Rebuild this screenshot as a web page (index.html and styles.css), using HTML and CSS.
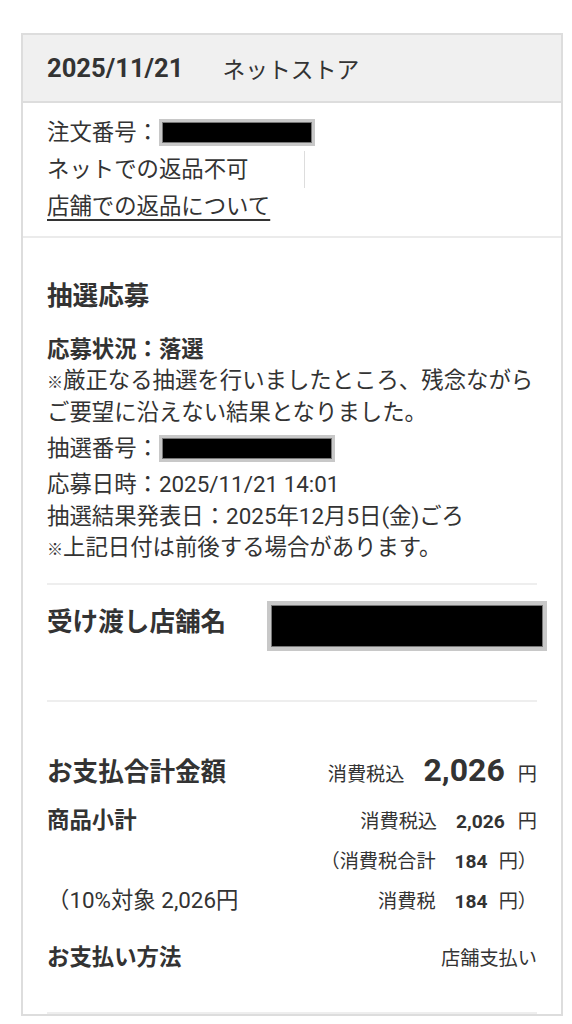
FILE: index.html
```html
<!DOCTYPE html>
<html lang="ja">
<head>
<meta charset="utf-8">
<meta name="viewport" content="width=device-width, initial-scale=1">
<title>注文履歴</title>
<link rel="stylesheet" href="styles.css">
</head>
<body>

<div class="order-card">
  <div class="order-head">
    <span class="order-date">2025/11/21</span>
    <span class="order-shop">ネットストア</span>
  </div>

  <div class="order-info">
    <div class="info-line">注文番号：<span class="masked masked-order"></span></div>
    <div class="info-line"><span class="no-return">ネットでの返品不可</span></div>
    <div class="info-line"><a href="#" class="return-link">店舗での返品について</a></div>
  </div>

  <div class="order-body">

    <!-- lottery result -->
    <div class="block lottery">
      <h2 class="block-title">抽選応募</h2>
      <p class="lottery-status">応募状況：落選</p>
      <p><span class="note">※</span>厳正なる抽選を行いましたところ、残念ながら<br>ご要望に沿えない結果となりました。</p>
      <p class="line-masked">抽選番号：<span class="masked masked-lottery"></span></p>
      <p>応募日時：2025/11/21 14:01</p>
      <p>抽選結果発表日：2025年12月5日(金)ごろ</p>
      <p><span class="note">※</span>上記日付は前後する場合があります。</p>
    </div>

    <!-- pickup store -->
    <div class="block store">
      <div class="store-label">受け渡し店舗名</div>
      <span class="masked masked-store"></span>
    </div>

    <!-- payment -->
    <div class="block payment">
      <div class="pay-row pay-total">
        <span class="pay-label">お支払合計金額</span>
        <span class="pay-value">
          <span class="tax-label">消費税込</span><span class="amount amount-lg">2,026</span><span class="yen">円</span>
        </span>
      </div>
      <div class="pay-row pay-sub">
        <span class="pay-label-sm">商品小計</span>
        <span class="pay-value">
          <span class="tax-label">消費税込</span><span class="amount">2,026</span><span class="yen">円</span>
        </span>
      </div>
      <div class="pay-row pay-tax">
        <span class="pay-value">
          <span class="tax-label">（消費税合計</span><span class="amount">184</span><span class="yen yen-close">円）</span>
        </span>
      </div>
      <div class="pay-row pay-tax2">
        <span class="pay-target">（10%対象 2,026円</span>
        <span class="pay-value">
          <span class="tax-label">消費税</span><span class="amount">184</span><span class="yen yen-close">円）</span>
        </span>
      </div>
      <div class="pay-row pay-method">
        <span class="pay-label-sm">お支払い方法</span>
        <span class="tax-label">店舗支払い</span>
      </div>
    </div>

  </div>
</div>

</body>
</html>
```

FILE: styles.css
```css
body {
  margin: 0;
  font-family: Roboto, "Noto Sans CJK JP", sans-serif;
  color: #333;
  background: #fff;
}
* {box-sizing: border-box;}

/* Card wrapper */
.order-card {
  width: 542px;
  margin: 33px 0 0 21px;
  border: 2px solid #ddd;
}

/* Grey header with date and shop */
.order-head {
  height: 68px;
  display: flex;
  align-items: center;
  padding: 0 24px;
  background: #f0f0f0;
  border-bottom: 2px solid #ddd;
}
.order-date {
  font-size: 25.6px;
  font-weight: 700;
  margin-right: 39px;
}
.order-shop {
  font-size: 22.8px;
}

/* Order number etc */
.order-info {
  padding: 11px 24px;
  border-bottom: 2px solid #ebebeb;
  font-size: 22.4px;
}
.info-line {
  height: 37px;
  line-height: 37px;
}
.no-return {
  display: inline-block;
  width: 258px;
  border-right: 1px solid #ddd;
}
.return-link {
  color: #333;
  text-decoration: underline;
  text-decoration-thickness: 1.5px;
  text-underline-offset: 5px;
}

/* Blacked out values */
.masked {
  display: inline-block;
  flex-shrink: 0;
  background: #000;
  border: 3px solid #c8c8c8;
  box-shadow: inset 0 0 0 1px #777;
  vertical-align: middle;
}
.masked-order {
  width: 156px;
  height: 27px;
  margin-top: -4px;
}
.masked-lottery {
  width: 176px;
  height: 27px;
}
.masked-store {
  width: 280px;
  height: 50px;
  border-width: 4px;
}

.order-body {
  padding: 0 24px;
}
.block {
  border-bottom: 2px solid #eee;
}
.block-title {
  margin: 0 0 19px;
  font-size: 25.6px;
  line-height: 36px;
  font-weight: 700;
}

/* Lottery */
.lottery {
  padding: 40px 0 19px;
}
.lottery p {
  margin: 0;
  font-size: 22.4px;
  line-height: 31.5px;
  white-space: nowrap;
}
.lottery .lottery-status {
  font-weight: 700;
  line-height: 32px;
}
.lottery .line-masked {
  display: flex;
  align-items: center;
  height: 41px;
}
.note {
  font-size: 16px;
  line-height: 1;
}

/* Store */
.store {
  display: flex;
  align-items: flex-start;
  padding: 16px 0 49px;
}
.store-label {
  width: 220px;
  flex-shrink: 0;
  font-size: 25.6px;
  font-weight: 700;
  line-height: 42px;
}

/* Payment */
.payment {
  padding: 46px 0 39px;
}
.pay-row {
  display: flex;
  justify-content: space-between;
  align-items: baseline;
  height: 32px;
  line-height: 32px;
}
.pay-total {
  height: 44px;
  line-height: 44px;
}
.pay-sub {
  margin-top: 12px;
}
.pay-tax {
  margin-top: 10px;
}
.pay-tax2 {
  margin-top: 6px;
}
.pay-method {
  margin-top: 25px;
}
.pay-label {
  font-size: 25.6px;
  font-weight: 700;
}
.pay-label-sm {
  font-size: 22.4px;
  font-weight: 700;
}
.pay-target {
  font-size: 22.4px;
}
.pay-value {
  margin-left: auto;
}
.tax-label, .yen {
  font-size: 19.2px;
}
.amount {
  font-size: 19.2px;
  font-weight: 700;
  margin: 0 13px 0 19px;
}
.amount-lg {
  font-size: 32px;
  margin-left: 19px;
}
.yen-close {
  margin-left: -2px;
}
```
